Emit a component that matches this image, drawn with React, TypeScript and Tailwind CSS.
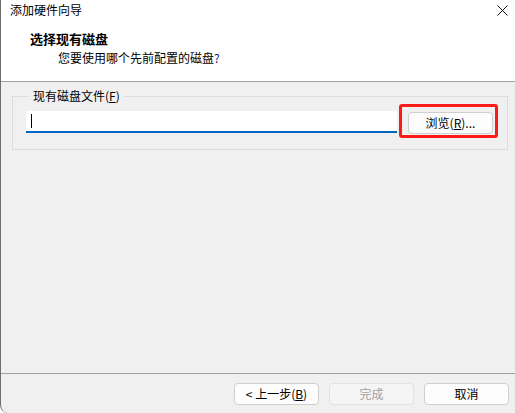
import React from "react";

const font = { fontFamily: '"Noto Sans CJK SC", "Noto Sans", sans-serif' };

function Btn({ children, disabled }: { children: React.ReactNode; disabled?: boolean }) {
  return (
    <button
      disabled={disabled}
      className={
        disabled
          ? "w-[85px] h-[22px] rounded-[4px] border border-[#e3e3e3] bg-[#f5f5f5] text-[12px] leading-none text-[#a0a0a0]"
          : "w-[85px] h-[22px] rounded-[4px] border border-[#cfcfcf] bg-[#fdfdfd] text-[12px] leading-none text-black"
      }
    >
      {children}
    </button>
  );
}

export default function App() {
  return (
    <div
      style={font}
      className="w-[515px] h-[413px] bg-[#f0f0f0] border-l border-[#6e6e6e] rounded-bl-[8px] overflow-hidden flex flex-col text-black"
    >
      {/* header */}
      <div className="h-[82px] bg-white border-b border-[#a0a0a0] flex flex-col">
        <div className="flex items-center justify-between h-[20px] pl-[9px] pr-[6px]">
          <span className="text-[12px] leading-none">添加硬件向导</span>
          <svg width="11" height="11" viewBox="0 0 11 11" className="mr-[1px]">
            <path d="M0.5 0.5 L10.5 10.5 M10.5 0.5 L0.5 10.5" stroke="#111" strokeWidth="1" />
          </svg>
        </div>
        <div className="pl-[29px] pt-[12px] text-[13px] font-bold leading-none">选择现有磁盘</div>
        <div className="pl-[57px] pt-[7px] text-[12px] leading-none">
          您要使用哪个先前配置的磁盘<span className="text-[#1a1a80]">?</span>
        </div>
      </div>

      {/* body */}
      <div className="flex-1 pl-[11px] pt-[8px]">
        <fieldset className="w-[496px] border border-[#dcdcdc] h-[60px] px-[13px] pt-[7px]">
          <legend className="ml-[3px] px-[4px] text-[12px] leading-none">
            现有磁盘文件(<span className="underline">F</span>)
          </legend>
          <div className="flex items-center gap-[11px]">
            <div className="w-[371px] h-[22px] bg-white border-b-2 border-[#0067c0] flex items-center pl-[5px]">
              <div className="w-px h-[14px] bg-black" />
            </div>
            <div className="relative">
              <Btn>
                浏览(<span className="underline">R</span>)...
              </Btn>
              <div className="absolute -left-[9px] -top-[5px] w-[99px] h-[34px] border-[3px] border-[#ff1a1a] rounded-[3px] pointer-events-none" />
            </div>
          </div>
        </fieldset>
      </div>

      {/* footer */}
      <div className="h-[40px] border-t border-[#a0a0a0] flex items-start justify-end gap-[10px] pt-[9px] pr-[6px]">
        <Btn>
          &lt; 上一步(<span className="underline">B</span>)
        </Btn>
        <Btn disabled>完成</Btn>
        <Btn>取消</Btn>
      </div>
    </div>
  );
}
